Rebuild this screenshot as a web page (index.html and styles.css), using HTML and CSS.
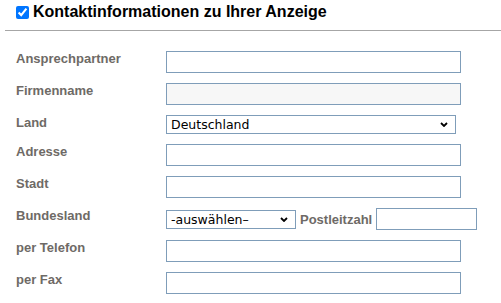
FILE: index.html
```html
<!DOCTYPE html>
<html lang="de">
  <head>
    <meta charset="UTF-8" />
    <meta name="viewport" content="width=device-width, initial-scale=1.0" />
    <title>Kontaktinformationen</title>
    <link rel="stylesheet" href="styles.css">
  </head>
  <body>
    <div class="box">
      <h2 class="head">
        <input type="checkbox" class="check" checked />
        <span>Kontaktinformationen zu Ihrer Anzeige</span>
      </h2>

      <div class="form">
        <div class="row">
          <label class="lbl">Ansprechpartner</label>
          <input type="text" class="field" />
        </div>
        <div class="row">
          <label class="lbl">Firmenname</label>
          <input type="text" class="field grey" />
        </div>
        <div class="row">
          <label class="lbl">Land</label>
          <span class="pick">
            <select class="drop wide">
              <option>Deutschland</option>
            </select>
            <svg class="arrow" width="8" height="5" viewBox="0 0 8 5"><path d="M1 1l3 3 3-3" fill="none" stroke="#000" stroke-width="1.8"/></svg>
          </span>
        </div>
        <div class="row">
          <label class="lbl">Adresse</label>
          <input type="text" class="field" />
        </div>
        <div class="row">
          <label class="lbl">Stadt</label>
          <input type="text" class="field" />
        </div>
        <div class="row">
          <label class="lbl">Bundesland</label>
          <div class="inline">
            <span class="pick">
              <select class="drop small">
                <option>-auswählen–</option>
              </select>
              <svg class="arrow" width="8" height="5" viewBox="0 0 8 5"><path d="M1 1l3 3 3-3" fill="none" stroke="#000" stroke-width="1.8"/></svg>
            </span>
            <label class="lbl short">Postleitzahl</label>
            <input type="text" class="field zip" />
          </div>
        </div>
        <div class="row">
          <label class="lbl">per Telefon</label>
          <input type="text" class="field" />
        </div>
        <div class="row">
          <label class="lbl">per Fax</label>
          <input type="text" class="field" />
        </div>
      </div>
    </div>
  </body>
</html>
```

FILE: styles.css
```css
body {
  margin: 0;
  background-color: white;
  font-family: "Liberation Sans", Arial, sans-serif;
}
.box {
  margin-left: 5px;
}
.head {
  display: flex;
  align-items: center;
  gap: 4px;
  margin: 0;
  padding: 2px 0 8px 11px;
  font-size: 16px;
  line-height: 20px;
  font-weight: bold;
  color: black;
  border-bottom: 1px solid #a6a6a6;
}
.check {
  margin: 0;
  width: 13px;
  height: 13px;
  accent-color: #0075ff;
}
.form {
  padding: 20px 0 0 11px;
}
.row {
  display: flex;
  align-items: flex-start;
  padding-bottom: 10px;
}
.lbl {
  flex: none;
  width: 150px;
  font-size: 13px;
  line-height: 15px;
  font-weight: bold;
  color: #6e6a66;
}
.lbl.short {
  width: auto;
}
.field {
  box-sizing: border-box;
  width: 295px;
  height: 22px;
  margin: 0;
  padding: 0 3px;
  border: 1px solid #7f9db9;
  border-radius: 0;
  background-color: white;
  outline: none;
}
.field.grey {
  background-color: #f7f7f7;
}
.field.zip {
  width: 101px;
}
.pick {
  position: relative;
  display: inline-flex;
}
.drop {
  appearance: none;
  box-sizing: border-box;
  height: 19px;
  margin: 0;
  padding: 0 0 0 4px;
  border: 1px solid #7f9db9;
  border-radius: 0;
  background-color: white;
  color: black;
  font-family: "DejaVu Sans", Verdana, sans-serif;
  font-size: 12.5px;
  line-height: 17px;
}
.drop.wide {
  width: 290px;
}
.drop.small {
  width: 130px;
}
.arrow {
  position: absolute;
  right: 8px;
  top: 7px;
  pointer-events: none;
}
.inline {
  display: flex;
  align-items: center;
  gap: 4px;
}
```
